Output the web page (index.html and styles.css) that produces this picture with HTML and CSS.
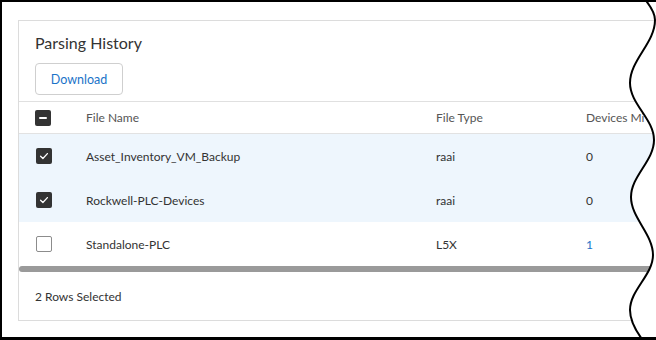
FILE: index.html
```html
<!DOCTYPE html>
<html lang="en">
<head>
<meta charset="utf-8">
<title>Parsing History</title>
<link rel="stylesheet" href="styles.css">
</head>
<body>
<div class="frame">
  <section class="card">
    <h2 class="title">Parsing History</h2>
    <button class="btn" type="button">Download</button>
    <div class="table">
      <div class="row head">
        <span class="cb cb-ind"><span class="dash"></span></span>
        <span>File Name</span>
        <span>File Type</span>
        <span>Devices Mi</span>
      </div>
      <div class="row sel">
        <span class="cb cb-on"><svg viewBox="0 0 16 16" width="16" height="16"><path d="M4.6 8.3 L6.9 10.5 L11.4 5.6" fill="none" stroke="#fff" stroke-width="1.3" stroke-linecap="round" stroke-linejoin="round"/></svg></span>
        <span>Asset_Inventory_VM_Backup</span>
        <span>raai</span>
        <span>0</span>
      </div>
      <div class="row sel">
        <span class="cb cb-on"><svg viewBox="0 0 16 16" width="16" height="16"><path d="M4.6 8.3 L6.9 10.5 L11.4 5.6" fill="none" stroke="#fff" stroke-width="1.3" stroke-linecap="round" stroke-linejoin="round"/></svg></span>
        <span>Rockwell-PLC-Devices</span>
        <span>raai</span>
        <span>0</span>
      </div>
      <div class="row">
        <span class="cb cb-off"></span>
        <span>Standalone-PLC</span>
        <span>L5X</span>
        <span class="link">1</span>
      </div>
      <div class="scrollbar"></div>
      <div class="footer">2 Rows Selected</div>
    </div>
  </section>
  <svg class="tear" viewBox="0 0 656 340" width="656" height="340" aria-hidden="true">
    <path d="M643,-3 C649,4 655,12 655,20 C655,43 630,60 630,83 C630,104 654,119 654,140 C654,161 631,176 631,197 C631,218 653,234 653,255 C653,275 630,290 630,310 C630,322 637,333 645,343 L700,343 L700,-3 Z" fill="#fff"/>
    <path d="M643,-3 C649,4 655,12 655,20 C655,43 630,60 630,83 C630,104 654,119 654,140 C654,161 631,176 631,197 C631,218 653,234 653,255 C653,275 630,290 630,310 C630,322 637,333 645,343" fill="none" stroke="#000" stroke-width="2"/>
  </svg>
</div>
</body>
</html>
```

FILE: styles.css
```css
* { box-sizing: border-box; }
html, body { margin: 0; padding: 0; background: #fff; }
body { font-family: Lato, "Open Sans", sans-serif; color: #333; }

.frame {
  position: relative;
  width: 656px;
  height: 340px;
  overflow: hidden;
  background: #fff;
  border-left: 2px solid #000;
  border-top: 2px solid #000;
  border-bottom: 3px solid #000;
  padding: 18px 0 16px 16px;
}

.card {
  width: 720px;
  height: 100%;
  border: 1px solid #dcdcdc;
  background: #fff;
  display: flex;
  flex-direction: column;
}

.title {
  margin: 12px 0 0 16px;
  font-size: 16px;
  line-height: 20px;
  font-weight: 400;
  color: #333;
}

.btn {
  align-self: flex-start;
  margin: 10px 0 0 16px;
  width: 88px;
  height: 32px;
  border: 1px solid #cfcfcf;
  border-radius: 4px;
  background: #fff;
  color: #1a73c8;
  font-family: inherit;
  font-size: 12.5px;
  padding: 0;
}

.table {
  flex: 1;
  margin-top: 6px;
  border-top: 1px solid #e0e0e0;
  display: flex;
  flex-direction: column;
}

.row {
  display: grid;
  grid-template-columns: 51px 350px 150px 1fr;
  align-items: center;
  height: 44px;
  padding-left: 16px;
  font-size: 12px;
  color: #333;
}

.row.head {
  height: 32px;
  border-bottom: 1px solid #e2e2e2;
  color: #555;
}

.row.sel { background: #eef6fd; }

.link { color: #1a73c8; }

.cb {
  width: 16px;
  height: 16px;
  border-radius: 2px;
  display: flex;
  align-items: center;
  justify-content: center;
}
.cb-ind, .cb-on { background: #333; }
.cb-on { margin-left: 1px; }
.cb-off { border: 1px solid #8c8c8c; background: #fff; margin-left: 1px; }
.dash { width: 8px; height: 2px; background: #fff; border-radius: 1px; }

.scrollbar {
  height: 6px;
  flex: none;
  background: #9a9a9a;
  border-radius: 3px 0 0 3px;
}

.footer {
  flex: 1;
  display: flex;
  align-items: center;
  padding-left: 16px;
  font-size: 12px;
  color: #333;
}

.tear {
  position: absolute;
  left: -2px;
  top: -2px;
  z-index: 2;
}
```
